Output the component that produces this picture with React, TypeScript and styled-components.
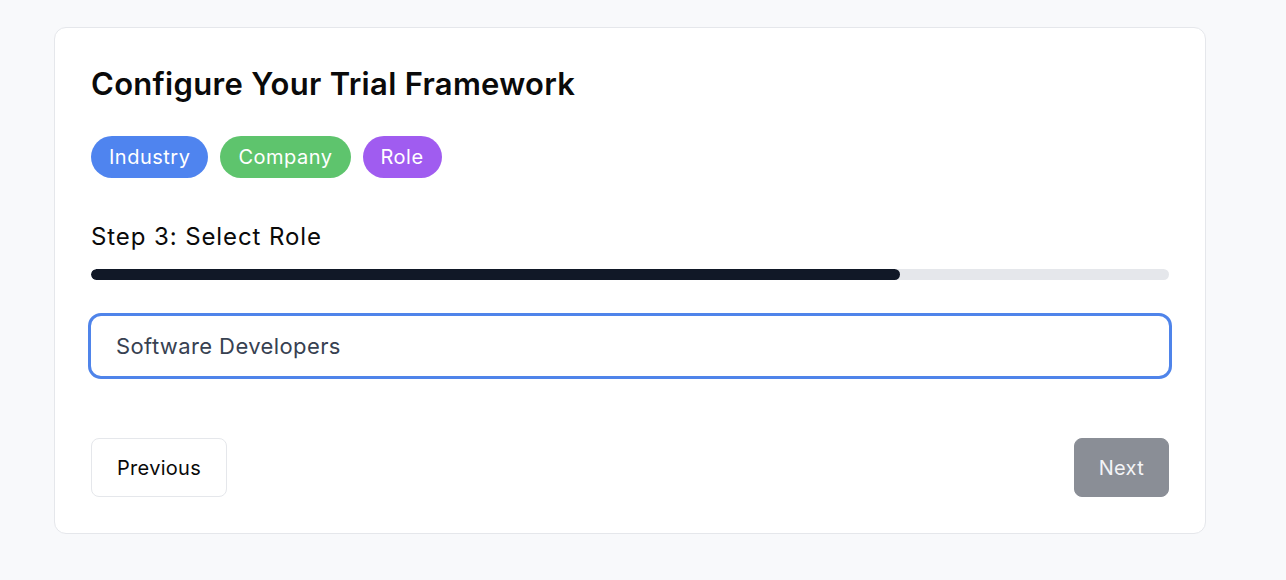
import React from "react";
import styled, { createGlobalStyle } from "styled-components";

const Global = createGlobalStyle`
  html, body { margin: 0; padding: 0; background: #f8f9fb; }
  body { font-family: Inter, "Noto Sans", sans-serif; -webkit-font-smoothing: antialiased; }
  * { box-sizing: border-box; }
`;

const Page = styled.div`
  padding: 27px 0 0 54px;
  min-height: 580px;
`;

const Card = styled.div`
  width: 1152px;
  background: #ffffff;
  border: 1px solid #e5e7eb;
  border-radius: 12px;
  padding: 36px;
  display: flex;
  flex-direction: column;
`;

const Title = styled.h1`
  margin: 0;
  font-size: 31px;
  line-height: 40px;
  font-weight: 600;
  letter-spacing: 0.3px;
  color: #0a0a0a;
`;

const Pills = styled.div`
  display: flex;
  gap: 12px;
  margin-top: 32px;
`;

const Pill = styled.span<{ $bg: string }>`
  height: 42px;
  padding: 0 18px;
  border-radius: 21px;
  background: ${(p) => p.$bg};
  color: #ffffff;
  font-size: 20px;
  letter-spacing: 0.5px;
  display: inline-flex;
  align-items: center;
`;

const StepLabel = styled.div`
  margin-top: 43px;
  font-size: 24px;
  line-height: 32px;
  letter-spacing: 0.9px;
  color: #0a0a0a;
`;

const Track = styled.div`
  margin-top: 16px;
  height: 11px;
  border-radius: 6px;
  background: #e5e7eb;
  overflow: hidden;
`;

const Fill = styled.div`
  height: 100%;
  background: #111827;
  border-radius: 6px;
`;

const Input = styled.input`
  margin: 33px -3px 0;
  height: 66px;
  border: 3px solid #4f84ea;
  border-radius: 13px;
  padding: 0 25px;
  font-family: inherit;
  font-size: 22px;
  letter-spacing: 0.4px;
  color: #374151;
  outline: none;
  background: #fff;
`;

const Footer = styled.div`
  display: flex;
  justify-content: space-between;
  margin-top: 59px;
`;

const Button = styled.button<{ $primary?: boolean }>`
  height: 59px;
  padding: 0 ${(p) => (p.$primary ? "24px" : "25px")};
  border-radius: 8px;
  font-family: inherit;
  font-size: 20px;
  letter-spacing: 0.3px;
  border: 1px solid ${(p) => (p.$primary ? "#8a8e96" : "#e5e7eb")};
  background: ${(p) => (p.$primary ? "#8a8e96" : "#ffffff")};
  color: ${(p) => (p.$primary ? "#f3f4f6" : "#0a0a0a")};
`;

export default function App() {
  const progress = 75;
  return (
    <Page>
      <Global />
      <Card>
        <Title>Configure Your Trial Framework</Title>
        <Pills>
          <Pill $bg="#4f84ef">Industry</Pill>
          <Pill $bg="#5ec46d">Company</Pill>
          <Pill $bg="#a05cf0">Role</Pill>
        </Pills>
        <StepLabel>Step 3: Select Role</StepLabel>
        <Track>
          <Fill style={{ width: `${progress}%` }} />
        </Track>
        <Input defaultValue="Software Developers" />
        <Footer>
          <Button>Previous</Button>
          <Button $primary>Next</Button>
        </Footer>
      </Card>
    </Page>
  );
}
